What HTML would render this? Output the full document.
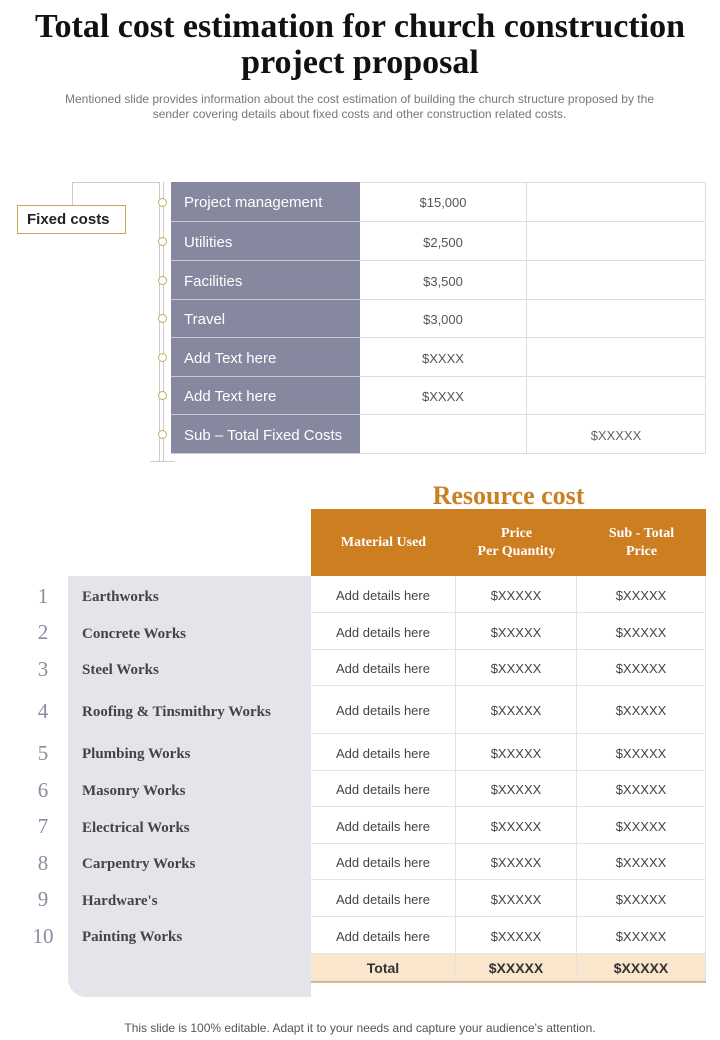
<!DOCTYPE html>
<html><head><meta charset="utf-8"><style>
*{margin:0;padding:0;box-sizing:border-box}
body{width:720px;height:1040px;background:#fff;position:relative;font-family:"Liberation Sans",sans-serif;overflow:hidden}
.a{position:absolute}
h1{position:absolute;top:9px;left:0;width:720px;text-align:center;font-family:"Liberation Serif",serif;font-weight:bold;font-size:34px;line-height:36px;color:#111}
.sub{top:92px;left:47px;width:625px;text-align:center;font-size:12px;line-height:15px;color:#777}
.fr{position:absolute;left:171px;width:535px;display:flex}
.fr div{border-bottom:1px solid #ddd;height:100%;display:flex;align-items:center;padding-top:2px}
.c1{width:189px;background:#85889f;color:#fff;font-size:15px;padding-left:13px;border-bottom:1px solid #c8c9d4!important}
.c2{width:167px;justify-content:center;font-size:13px;color:#555;border-right:1px solid #ddd}
.c3{width:179px;justify-content:center;font-size:13px;color:#666;border-right:1px solid #ddd}
.dot{position:absolute;left:158px;width:9px;height:9px;border:1px solid #c9a860;border-radius:50%;background:#fff}
.rr{position:absolute;left:311px;width:395px;display:flex;font-size:13px;color:#444}
.rr div{display:flex;align-items:center;justify-content:center;border-bottom:1px solid #e3e3e3;border-right:1px solid #e3e3e3;height:100%;padding-top:2px}
.num{position:absolute;left:20px;width:46px;text-align:center;font-family:"Liberation Serif",serif;font-size:21px;color:#8a8ca0}
.lab{position:absolute;left:82px;font-family:"Liberation Serif",serif;font-weight:bold;font-size:15px;color:#444}
</style></head><body>
<h1>Total cost estimation for church construction<br>project proposal</h1>
<div class="a sub">Mentioned slide provides information about the cost estimation of building the church structure proposed by the sender covering details about fixed costs and other construction related costs.</div>

<div class="a" style="left:72px;top:182px;width:88px;height:1px;background:#ccc"></div>
<div class="a" style="left:72px;top:182px;width:1px;height:23px;background:#ccc"></div>
<div class="a" style="left:159px;top:182px;width:1px;height:280px;background:#ccc"></div>
<div class="a" style="left:163px;top:182px;width:1px;height:280px;background:#ccc"></div>
<div class="a" style="left:150px;top:461px;width:25px;height:1px;background:#ccc"></div>
<div class="a" style="left:17px;top:205px;width:109px;height:29px;border:1px solid #c9a85a;font-weight:bold;font-size:15px;padding:5px 0 0 9px;color:#222">Fixed costs</div>

<div class="a" style="left:171px;top:182px;width:535px;height:1px;background:#ddd"></div>
<div class="fr" style="top:182px;height:40px"><div class="c1">Project management</div><div class="c2">$15,000</div><div class="c3"></div></div>
<div class="fr" style="top:222px;height:39px"><div class="c1">Utilities</div><div class="c2">$2,500</div><div class="c3"></div></div>
<div class="fr" style="top:261px;height:39px"><div class="c1">Facilities</div><div class="c2">$3,500</div><div class="c3"></div></div>
<div class="fr" style="top:300px;height:38px"><div class="c1">Travel</div><div class="c2">$3,000</div><div class="c3"></div></div>
<div class="fr" style="top:338px;height:39px"><div class="c1">Add Text here</div><div class="c2">$XXXX</div><div class="c3"></div></div>
<div class="fr" style="top:377px;height:38px"><div class="c1">Add Text here</div><div class="c2">$XXXX</div><div class="c3"></div></div>
<div class="fr" style="top:415px;height:39px"><div class="c1">Sub – Total Fixed Costs</div><div class="c2"></div><div class="c3">$XXXXX</div></div>
<div class="dot" style="top:198px"></div><div class="dot" style="top:237px"></div><div class="dot" style="top:276px"></div><div class="dot" style="top:314px"></div><div class="dot" style="top:353px"></div><div class="dot" style="top:391px"></div><div class="dot" style="top:430px"></div>

<div class="a" style="left:311px;top:481px;width:395px;text-align:center;font-family:'Liberation Serif',serif;font-weight:bold;font-size:26px;color:#c98020">Resource cost</div>
<div class="a" style="left:311px;top:509px;width:395px;height:67px;background:#cc7e20;display:flex;color:#fff;font-family:'Liberation Serif',serif;font-weight:bold;font-size:14px;text-align:center;line-height:18px">
<div style="width:145px;display:flex;align-items:center;justify-content:center">Material Used</div>
<div style="width:121px;display:flex;align-items:center;justify-content:center">Price<br>Per Quantity</div>
<div style="width:129px;display:flex;align-items:center;justify-content:center">Sub - Total<br>Price</div></div>
<div class="a" style="left:68px;top:576px;width:243px;height:421px;background:#e4e5ea;border-radius:0 0 0 18px"></div>

<div class="rr" style="top:576px;height:37px"><div style="width:145px">Add details here</div><div style="width:121px">$XXXXX</div><div style="width:129px">$XXXXX</div></div>
<div class="rr" style="top:613px;height:37px"><div style="width:145px">Add details here</div><div style="width:121px">$XXXXX</div><div style="width:129px">$XXXXX</div></div>
<div class="rr" style="top:650px;height:36px"><div style="width:145px">Add details here</div><div style="width:121px">$XXXXX</div><div style="width:129px">$XXXXX</div></div>
<div class="rr" style="top:686px;height:48px"><div style="width:145px">Add details here</div><div style="width:121px">$XXXXX</div><div style="width:129px">$XXXXX</div></div>
<div class="rr" style="top:734px;height:37px"><div style="width:145px">Add details here</div><div style="width:121px">$XXXXX</div><div style="width:129px">$XXXXX</div></div>
<div class="rr" style="top:771px;height:36px"><div style="width:145px">Add details here</div><div style="width:121px">$XXXXX</div><div style="width:129px">$XXXXX</div></div>
<div class="rr" style="top:807px;height:37px"><div style="width:145px">Add details here</div><div style="width:121px">$XXXXX</div><div style="width:129px">$XXXXX</div></div>
<div class="rr" style="top:844px;height:36px"><div style="width:145px">Add details here</div><div style="width:121px">$XXXXX</div><div style="width:129px">$XXXXX</div></div>
<div class="rr" style="top:880px;height:37px"><div style="width:145px">Add details here</div><div style="width:121px">$XXXXX</div><div style="width:129px">$XXXXX</div></div>
<div class="rr" style="top:917px;height:37px"><div style="width:145px">Add details here</div><div style="width:121px">$XXXXX</div><div style="width:129px">$XXXXX</div></div>
<div class="rr" style="top:954px;height:29px;background:#fae6cc;font-weight:bold;font-size:14px;color:#333;border-bottom:2px solid #d9b98a"><div style="width:145px">Total</div><div style="width:121px">$XXXXX</div><div style="width:129px">$XXXXX</div></div>

<div class="num" style="top:584px">1</div><div class="lab" style="top:589px">Earthworks</div>
<div class="num" style="top:620px">2</div><div class="lab" style="top:626px">Concrete Works</div>
<div class="num" style="top:657px">3</div><div class="lab" style="top:662px">Steel Works</div>
<div class="num" style="top:699px">4</div><div class="lab" style="top:704px">Roofing &amp; Tinsmithry Works</div>
<div class="num" style="top:741px">5</div><div class="lab" style="top:746px">Plumbing Works</div>
<div class="num" style="top:778px">6</div><div class="lab" style="top:783px">Masonry Works</div>
<div class="num" style="top:814px">7</div><div class="lab" style="top:820px">Electrical Works</div>
<div class="num" style="top:851px">8</div><div class="lab" style="top:856px">Carpentry Works</div>
<div class="num" style="top:887px">9</div><div class="lab" style="top:893px">Hardware's</div>
<div class="num" style="top:924px">10</div><div class="lab" style="top:929px">Painting Works</div>

<div class="a" style="left:0;top:1021px;width:720px;text-align:center;font-size:12px;color:#555">This slide is 100% editable. Adapt it to your needs and capture your audience's attention.</div>
</body></html>
